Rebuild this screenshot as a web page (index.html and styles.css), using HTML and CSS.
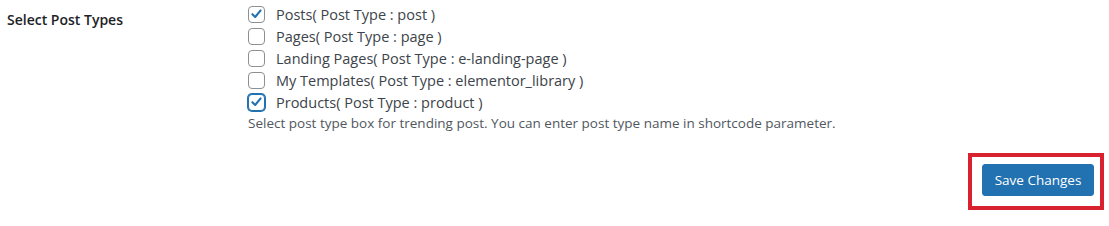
FILE: index.html
```html
<!DOCTYPE html>
<html lang="en">
<head>
    <meta charset="UTF-8">
    <title>Trending Post Settings</title>
    <link rel="stylesheet" href="styles.css">
</head>
<body>
    <div class="form-row">
        <div class="row-label">Select Post Types</div>
        <div class="row-field">
            <label class="check">
                <span class="box checked">
                    <svg viewBox="0 0 16 16" width="16" height="16"><path d="M3.6 8.2 L6.6 11.2 L12.4 4.2" fill="none" stroke="#2271b1" stroke-width="2.2" stroke-linecap="round" stroke-linejoin="round"/></svg>
                </span>
                Posts( Post Type : post )
            </label>
            <label class="check">
                <span class="box"></span>
                Pages( Post Type : page )
            </label>
            <label class="check">
                <span class="box"></span>
                Landing Pages( Post Type : e-landing-page )
            </label>
            <label class="check">
                <span class="box"></span>
                My Templates( Post Type : elementor_library )
            </label>
            <label class="check">
                <span class="box checked focus">
                    <svg viewBox="0 0 16 16" width="16" height="16"><path d="M3.6 8.2 L6.6 11.2 L12.4 4.2" fill="none" stroke="#2271b1" stroke-width="2.2" stroke-linecap="round" stroke-linejoin="round"/></svg>
                </span>
                Products( Post Type : product )
            </label>
            <p class="description">Select post type box for trending post. You can enter post type name in shortcode parameter.</p>
        </div>
    </div>

    <div class="submit-row">
        <div class="highlight">
            <button class="button-primary">Save Changes</button>
        </div>
    </div>
</body>
</html>
```

FILE: styles.css
```css
* {
    margin: 0;
    padding: 0;
    box-sizing: border-box;
}

body {
    font-family: "Open Sans", "Noto Sans", sans-serif;
    font-size: 14px;
    color: #1d2327;
    background: #fff;
    width: 1109px;
    height: 226px;
    overflow: hidden;
}

.form-row {
    display: flex;
    padding-top: 3px;
}

.row-label {
    width: 248px;
    padding: 7px 0 0 7px;
    font-weight: 600;
    font-size: 14px;
    color: #1d2327;
}

.row-field {
    display: flex;
    flex-direction: column;
}

.check {
    display: flex;
    align-items: center;
    height: 22px;
    font-size: 14.5px;
    color: #3c434a;
}

.box {
    display: inline-flex;
    width: 17px;
    height: 17px;
    margin-right: 11px;
    border: 1px solid #8c8f94;
    border-radius: 4px;
    background: #fff;
    align-items: center;
    justify-content: center;
}

.box.focus {
    border-color: #2271b1;
    box-shadow: 0 0 0 1px #2271b1;
}

.box svg {
    display: block;
}

.description {
    font-size: 13.5px;
    color: #50575e;
    margin-top: 1px;
}

.submit-row {
    display: flex;
    justify-content: flex-end;
    padding: 21px 5px 0 0;
}

.highlight {
    border: 4px solid #d9222f;
    padding: 7px 6px 10px 10px;
}

.button-primary {
    display: block;
    width: 112px;
    height: 32px;
    font-family: inherit;
    font-size: 13.5px;
    color: #fff;
    background: #2271b1;
    border: 1px solid #2271b1;
    border-radius: 3px;
    cursor: pointer;
}
```
